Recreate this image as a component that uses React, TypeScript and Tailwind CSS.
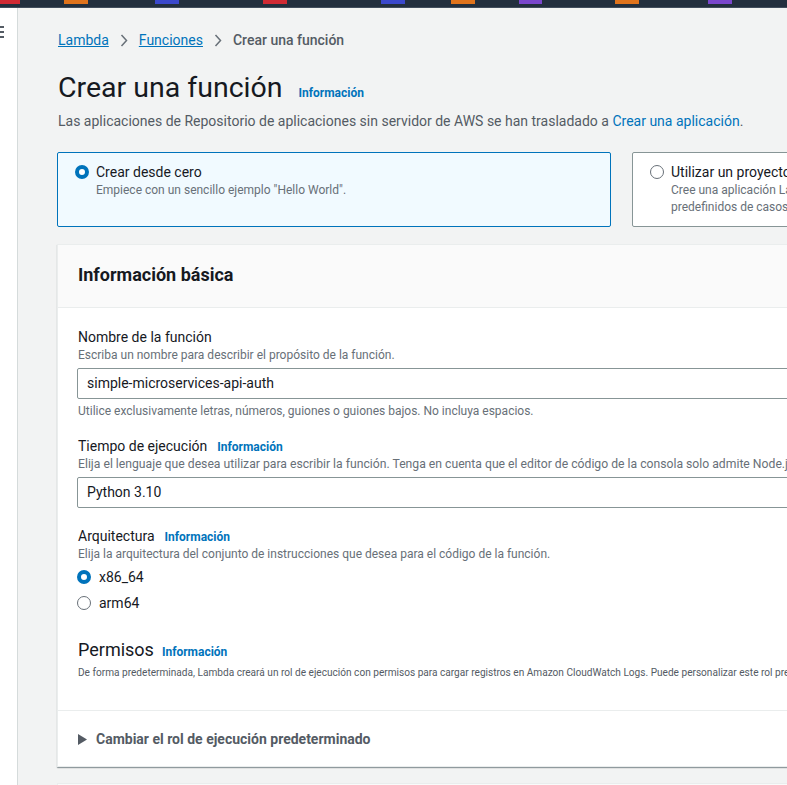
import React from "react";

const Info = ({ cls = "" }: { cls?: string }) => (
  <span className={`text-[12px] font-bold text-[#0073bb] ${cls}`}>Información</span>
);

const Chevron = () => (
  <svg width="8" height="13" viewBox="0 0 8 13" className="mx-[11px] shrink-0">
    <path d="M1.5 1 L6.5 6.5 L1.5 12" fill="none" stroke="#687078" strokeWidth="1.5" />
  </svg>
);

const RadioOn = () => (
  <span className="w-[14px] h-[14px] rounded-full border-[4px] border-[#0073bb] bg-white shrink-0 box-border" />
);
const RadioOff = () => (
  <span className="w-[14px] h-[14px] rounded-full border-[1.5px] border-[#687078] bg-white shrink-0 box-border" />
);

const blocks = [
  { ml: "ml-0", w: "w-[20px]", c: "bg-[#d12a34]" },
  { ml: "ml-[44px]", w: "w-[24px]", c: "bg-[#e0731c]" },
  { ml: "ml-[67px]", w: "w-[24px]", c: "bg-[#3b48cc]" },
  { ml: "ml-[84px]", w: "w-[24px]", c: "bg-[#d12a34]" },
  { ml: "ml-[94px]", w: "w-[24px]", c: "bg-[#3b48cc]" },
  { ml: "ml-[46px]", w: "w-[24px]", c: "bg-[#e0731c]" },
  { ml: "ml-[44px]", w: "w-[23px]", c: "bg-[#7a46cc]" },
  { ml: "ml-[73px]", w: "w-[24px]", c: "bg-[#e0731c]" },
  { ml: "ml-[69px]", w: "w-[24px]", c: "bg-[#7a46cc]" },
];

export default function App() {
  return (
    <div className="h-[785px] w-[787px] overflow-hidden bg-[#f2f3f3] font-[Roboto,Arial,sans-serif] text-[#16191f]">
      {/* top nav bar */}
      <div className="h-[8px] bg-[#232f3e] border-b border-[#414d5c] flex items-start">
        {blocks.map((b, i) => (
          <div key={i} className={`${b.ml} ${b.w} ${b.c} h-[4px] shrink-0`} />
        ))}
      </div>
      <div className="flex h-[777px]">
        {/* side strip */}
        <div className="w-[18px] shrink-0 bg-white border-r border-[#d5dbdb] pt-[18px]">
          <div className="flex flex-col gap-[3px]">
            <div className="w-[4px] h-[2px] bg-[#545b64]" />
            <div className="w-[4px] h-[2px] bg-[#545b64]" />
            <div className="w-[4px] h-[2px] bg-[#545b64]" />
          </div>
        </div>
        {/* main */}
        <div className="flex-1 overflow-hidden">
          <div className="w-[1743px] pl-[39px] pt-[22px]">
            {/* breadcrumb */}
            <div className="flex items-center h-[20px] text-[14px] leading-[20px] pl-px">
              <span className="text-[#0073bb] underline">Lambda</span>
              <Chevron />
              <span className="text-[#0073bb] underline">Funciones</span>
              <Chevron />
              <span className="text-[#545b64] font-medium">Crear una función</span>
            </div>
            {/* title */}
            <div className="mt-[20px] flex items-baseline h-[36px] pl-px">
              <h1 className="text-[28.5px] leading-[36px] font-normal text-[#16191f]">Crear una función</h1>
              <Info cls="ml-[16px]" />
            </div>
            <p className="mt-[5px] text-[14px] leading-[20px] text-[#545b64] pl-px">
              Las aplicaciones de Repositorio de aplicaciones sin servidor de AWS se han trasladado a{" "}
              <span className="text-[#0073bb]">Crear una aplicación</span>.
            </p>
            {/* cards */}
            <div className="mt-[21px] grid grid-cols-3 gap-[21px] w-[1704px]">
              <div className="border border-[#0073bb] bg-[#f1faff] rounded-[2px] pl-[17px] pt-[9px] pb-[10px] flex gap-[7px]">
                <div className="h-[20px] flex items-center"><RadioOn /></div>
                <div>
                  <div className="text-[14px] leading-[20px] text-[#16191f]">Crear desde cero</div>
                  <div className="text-[12px] leading-[17px] text-[#687078]">Empiece con un sencillo ejemplo "Hello World".</div>
                </div>
              </div>
              <div className="border border-[#879596] bg-white rounded-[2px] pl-[17px] pt-[9px] pb-[10px] flex gap-[7px]">
                <div className="h-[20px] flex items-center"><RadioOff /></div>
                <div>
                  <div className="text-[14px] leading-[20px] text-[#16191f]">Utilizar un proyecto</div>
                  <div className="text-[12px] leading-[17px] text-[#687078]">Cree una aplicación Lambda a partir de código de ejemplo y</div>
                  <div className="text-[12px] leading-[17px] text-[#687078]">predefinidos de casos de uso comunes.</div>
                </div>
              </div>
              <div className="border border-[#879596] bg-white rounded-[2px]" />
            </div>
            {/* panel */}
            <div className="mt-[17px] w-[1704px] bg-white border border-[#eaeded] shadow-[0_1px_1px_0_rgba(0,28,36,0.3),1px_1px_1px_0_rgba(0,28,36,0.15)]">
              <div className="h-[63px] bg-[#fafafa] border-b border-[#eaeded] pl-[20px] pt-[19px]">
                <h2 className="text-[18px] leading-[22px] font-bold text-[#16191f]">Información básica</h2>
              </div>
              <div className="pl-[19px] pt-[19px] pb-[30px]">
                <div className="text-[14px] leading-[20px] pl-px">Nombre de la función</div>
                <div className="text-[12px] leading-[16px] text-[#687078] pl-px">Escriba un nombre para describir el propósito de la función.</div>
                <div className="mt-[5px] h-[31px] border border-[#879596] rounded-[2px] flex items-center pl-[9px] text-[14px]">
                  simple-microservices-api-auth
                </div>
                <div className="mt-[4px] text-[12px] leading-[16px] text-[#687078] pl-px">
                  Utilice exclusivamente letras, números, guiones o guiones bajos. No incluya espacios.
                </div>

                <div className="mt-[17px] flex items-baseline h-[20px] pl-px">
                  <span className="text-[14px] leading-[20px]">Tiempo de ejecución</span>
                  <Info cls="ml-[10px]" />
                </div>
                <div className="text-[12.2px] leading-[16px] text-[#687078] whitespace-nowrap pl-px">
                  Elija el lenguaje que desea utilizar para escribir la función. Tenga en cuenta que el editor de código de la consola solo admite Node.js, Python y Ruby.
                </div>
                <div className="mt-[5px] h-[31px] border border-[#879596] rounded-[2px] flex items-center pl-[9px] text-[14px]">
                  Python 3.10
                </div>

                <div className="mt-[18px] flex items-baseline h-[20px] pl-px">
                  <span className="text-[14px] leading-[20px]">Arquitectura</span>
                  <Info cls="ml-[10px]" />
                </div>
                <div className="text-[12px] leading-[16px] text-[#687078] pl-px">
                  Elija la arquitectura del conjunto de instrucciones que desea para el código de la función.
                </div>
                <div className="mt-[5px] flex items-center gap-[8px] h-[20px] text-[14px]">
                  <RadioOn /> <span>x86_64</span>
                </div>
                <div className="mt-[6px] flex items-center gap-[8px] h-[20px] text-[14px]">
                  <RadioOff /> <span>arm64</span>
                </div>

                <div className="mt-[25px] flex items-baseline h-[24px] pl-px">
                  <span className="text-[18px] leading-[24px]">Permisos</span>
                  <Info cls="ml-[8px]" />
                </div>
                <div className="mt-[4px] text-[10.1px] leading-[14px] text-[#545b64] whitespace-nowrap pl-px">
                  De forma predeterminada, Lambda creará un rol de ejecución con permisos para cargar registros en Amazon CloudWatch Logs. Puede personalizar este rol predeterminado más adelante cuando agregue desencadenadores.
                </div>
              </div>
              <div className="border-t border-[#eaeded] pl-[20px] pt-[18px] pb-[17px] flex items-center gap-[9px]">
                <svg width="9" height="11" viewBox="0 0 9 11"><path d="M0 0 L9 5.5 L0 11 Z" fill="#545b64" /></svg>
                <span className="text-[14px] leading-[20px] font-bold text-[#545b64]">Cambiar el rol de ejecución predeterminado</span>
              </div>
            </div>
            <div className="mt-[16px] w-[1704px] h-[60px] bg-[#fafafa] border border-[#eaeded]" />
          </div>
        </div>
      </div>
    </div>
  );
}
